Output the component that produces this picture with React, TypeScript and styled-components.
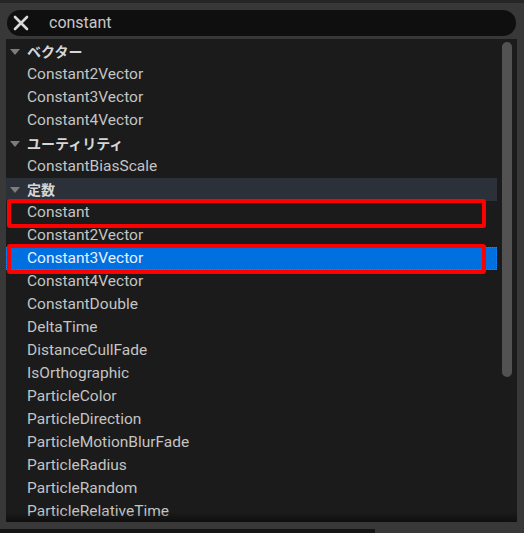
import React from "react";
import styled, { createGlobalStyle } from "styled-components";

const Global = createGlobalStyle`
  html, body { margin: 0; padding: 0; background: #383838; overflow: hidden; }
  body { font-family: Roboto, "Noto Sans CJK JP", sans-serif; }
`;

const Page = styled.div`
  width: 524px;
  height: 533px;
  background: #383838;
  display: flex;
  flex-direction: column;
  overflow: hidden;
`;

const TopStrip = styled.div`
  height: 3px;
  background: #262626;
  flex: none;
`;

const SearchBar = styled.div`
  margin: 7px 7px 0 7px;
  height: 26px;
  width: 509px;
  border-radius: 13px;
  background: #0f0f0f;
  display: flex;
  align-items: center;
  flex: none;
`;

const ClearIcon = styled.svg`
  width: 16px;
  height: 16px;
  margin-left: 6px;
  flex: none;
`;

const SearchText = styled.span`
  margin-left: 20px;
  font-family: Roboto, sans-serif;
  font-size: 16px;
  color: #c8c8c8;
  line-height: 1;
`;

const Panel = styled.div`
  margin: 3px 7px 0 6px;
  width: 511px;
  height: 483px;
  background: #1b1b1b;
  display: flex;
  position: relative;
  overflow: hidden;
  flex: none;
  &::after {
    content: "";
    position: absolute;
    left: 0;
    right: 0;
    bottom: 0;
    height: 10px;
    background: linear-gradient(to bottom, rgba(0,0,0,0), rgba(0,0,0,0.45));
    pointer-events: none;
  }
`;

const List = styled.div`
  width: 491px;
  display: flex;
  flex-direction: column;
  flex: none;
  padding-top: 1px;
`;

const ScrollTrack = styled.div`
  width: 20px;
  flex: none;
  display: flex;
  padding-top: 3px;
  padding-left: 5px;
  box-sizing: border-box;
`;

const Thumb = styled.div`
  width: 10px;
  height: 335px;
  border-radius: 5px;
  background: #525252;
  flex: none;
`;

const Row = styled.div<{ $kind: "item" | "category"; $selected?: boolean; $hover?: boolean }>`
  position: relative;
  height: 23px;
  flex: none;
  display: flex;
  align-items: center;
  box-sizing: border-box;
  padding-bottom: 1px;
  padding-left: ${(p) => (p.$kind === "category" ? "4px" : "21px")};
  font-family: ${(p) =>
    p.$kind === "category"
      ? `"Noto Sans CJK JP", Roboto, sans-serif`
      : `Roboto, "Noto Sans CJK JP", sans-serif`};
  font-size: ${(p) => (p.$kind === "category" ? "14px" : "15.5px")};
  font-weight: ${(p) => (p.$kind === "category" ? 700 : 400)};
  color: ${(p) => (p.$selected ? "#e8f0ff" : p.$kind === "category" ? "#d6d6d6" : "#c4c4c4")};
  background: ${(p) => (p.$selected ? "#0070e0" : p.$hover ? "#2b3039" : "transparent")};
  outline: ${(p) => (p.$selected ? "1px dotted #8a6a50" : "none")};
  outline-offset: -1px;
  white-space: nowrap;
`;

const Triangle = styled.span`
  width: 0;
  height: 0;
  border-left: 5px solid transparent;
  border-right: 5px solid transparent;
  border-top: 6px solid #7c7c7c;
  margin-right: 7px;
  margin-top: 2px;
`;

const Annotation = styled.div<{ $top: number; $height: number }>`
  position: absolute;
  left: 1px;
  top: ${(p) => p.$top}px;
  width: 479px;
  height: ${(p) => p.$height}px;
  border: 4px solid #ff0000;
  border-radius: 3px;
  box-sizing: border-box;
  pointer-events: none;
`;

const Footer = styled.div`
  margin-top: 7px;
  height: 4px;
  width: 375px;
  background: #151515;
  flex: none;
`;

type Entry =
  | { kind: "category"; label: string; hover?: boolean }
  | { kind: "item"; label: string; selected?: boolean; mark?: { top: number; height: number } };

const entries: Entry[] = [
  { kind: "category", label: "ベクター" },
  { kind: "item", label: "Constant2Vector" },
  { kind: "item", label: "Constant3Vector" },
  { kind: "item", label: "Constant4Vector" },
  { kind: "category", label: "ユーティリティ" },
  { kind: "item", label: "ConstantBiasScale" },
  { kind: "category", label: "定数", hover: true },
  { kind: "item", label: "Constant", mark: { top: -2, height: 29 } },
  { kind: "item", label: "Constant2Vector" },
  { kind: "item", label: "Constant3Vector", selected: true, mark: { top: -3, height: 30 } },
  { kind: "item", label: "Constant4Vector" },
  { kind: "item", label: "ConstantDouble" },
  { kind: "item", label: "DeltaTime" },
  { kind: "item", label: "DistanceCullFade" },
  { kind: "item", label: "IsOrthographic" },
  { kind: "item", label: "ParticleColor" },
  { kind: "item", label: "ParticleDirection" },
  { kind: "item", label: "ParticleMotionBlurFade" },
  { kind: "item", label: "ParticleRadius" },
  { kind: "item", label: "ParticleRandom" },
  { kind: "item", label: "ParticleRelativeTime" },
];

export default function App() {
  return (
    <Page>
      <Global />
      <TopStrip />
      <SearchBar>
        <ClearIcon viewBox="0 0 16 16">
          <path d="M2 2 L14 14 M14 2 L2 14" stroke="#d8d8d8" strokeWidth="2.6" strokeLinecap="round" />
        </ClearIcon>
        <SearchText>constant</SearchText>
      </SearchBar>
      <Panel>
        <List>
          {entries.map((e, i) =>
            e.kind === "category" ? (
              <Row key={i} $kind="category" $hover={e.hover}>
                <Triangle />
                {e.label}
              </Row>
            ) : (
              <Row key={i} $kind="item" $selected={e.selected}>
                {e.label}
                {e.mark && <Annotation $top={e.mark.top} $height={e.mark.height} />}
              </Row>
            )
          )}
        </List>
        <ScrollTrack>
          <Thumb />
        </ScrollTrack>
      </Panel>
      <Footer />
    </Page>
  );
}
